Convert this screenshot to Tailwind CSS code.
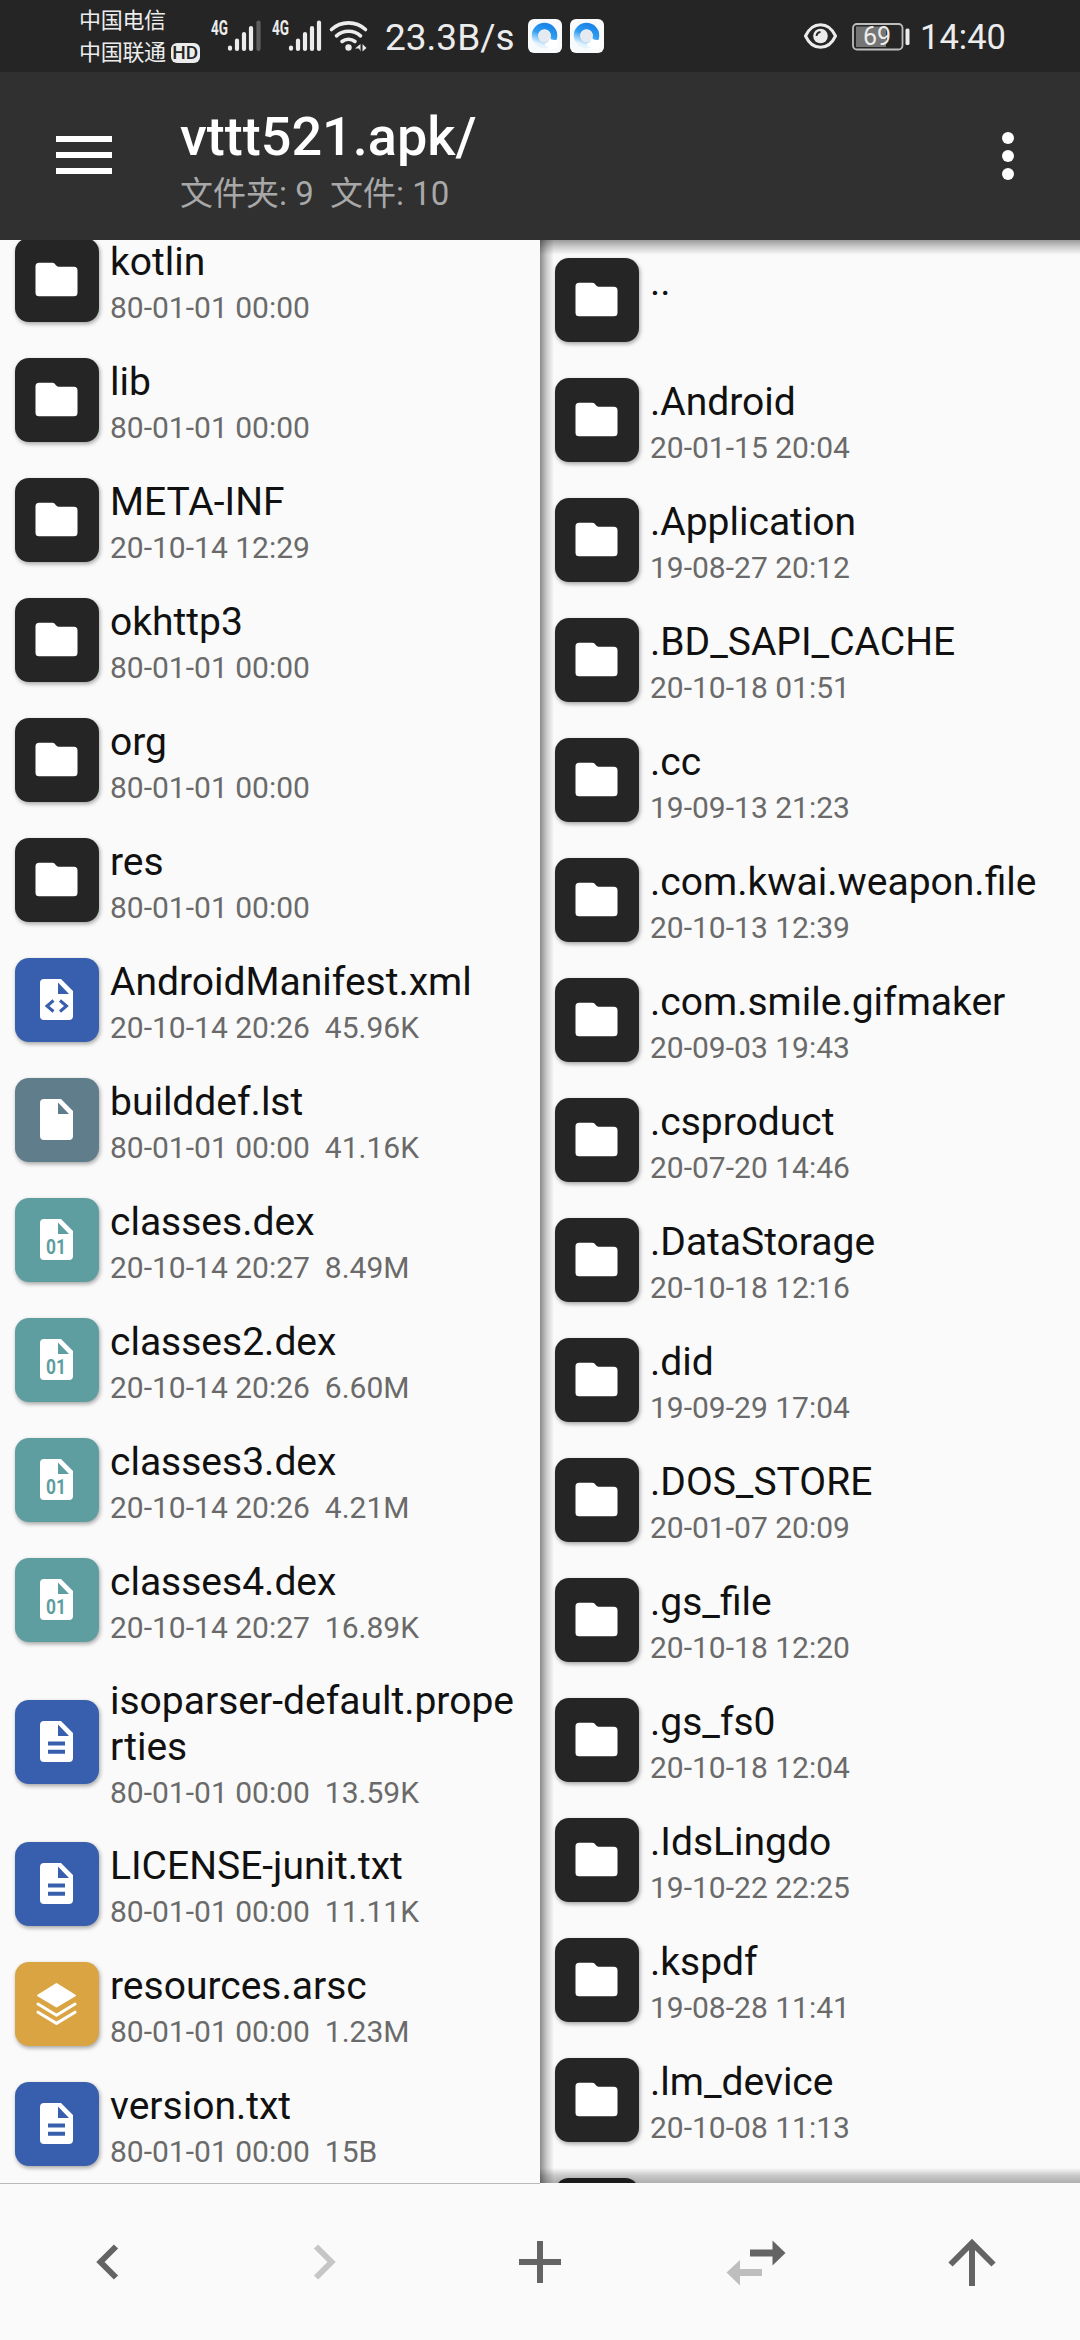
<!DOCTYPE html>
<html lang="zh-CN">
<head>
<meta charset="utf-8">
<title>vttt521.apk/</title>
<script src="https://cdn.jsdelivr.net/npm/@tailwindcss/browser@4"></script>
</head>
<body class="w-[1080px] h-[2340px] overflow-hidden bg-[#fafafa] font-['Roboto','Noto_Sans_CJK_SC',sans-serif] flex flex-col">

<!-- icon sprites -->
<svg class="hidden">
  <symbol id="folder" viewBox="0 0 84 84"><path fill="#fff" d="M24 24.700h13.500q1 0 1.700 .600l2.500 2.600q.800 .800 2 .800h15.300a3.500 3.500 0 0 1 3.500 3.500v22.500a3.500 3.500 0 0 1-3.500 3.500h-35a3.500 3.500 0 0 1-3.500-3.500v-26.500a3.500 3.500 0 0 1 3.500-3.500z"/></symbol>
  <symbol id="page" viewBox="0 0 84 84"><path fill="#fff" fill-rule="evenodd" d="M29 21h17l12 12v25a4 4 0 0 1-4 4h-25a4 4 0 0 1-4-4v-33a4 4 0 0 1 4-4zM43 24.500v11.500h11z"/></symbol>
</svg>

<header class="h-[72px] shrink-0 bg-[#252525] text-[#ececec] flex items-start">
  <div class="ml-[79px] w-[132px] pt-[5px] text-[22px] leading-[31px] shrink-0">
    <div class="h-[32px] tracking-[-0.3px]">中国电信</div>
    <div class="flex items-center h-[31px]"><span class="tracking-[-0.3px]">中国联通</span><span class="ml-[5px] w-[29px] h-[20px] rounded-[6px] bg-[#ececec] text-[#252525] text-[19px] leading-[20px] text-center font-medium">HD</span></div>
  </div>
  <svg class="w-[160px] h-[72px] shrink-0" viewBox="211 0 160 72">
    <g fill="#ececec" font-family="Roboto" font-weight="700" font-size="20"><text x="211" y="34.500" textLength="17" lengthAdjust="spacingAndGlyphs">4G</text><text x="272" y="34.500" textLength="17" lengthAdjust="spacingAndGlyphs">4G</text></g>
    <g stroke="#ececec" stroke-width="4.200" stroke-linecap="round">
      <path d="M230 47.500v1.200M237 40.500v8.500M244 34v15M251 28v21"/><path d="M258.500 22.500v26.500" stroke="#5e5e5e"/>
      <path d="M291 47.500v1.200M298 40.500v8.500M305 34v15M312 28v21M319 22.500v26.500"/>
    </g>
    <g fill="none" stroke="#ececec" stroke-width="3.600" stroke-linecap="round"><path d="M331.500 29.500a25 25 0 0 1 34 0M336.500 35.800a18 18 0 0 1 24 0M342 41.500a10.500 10.500 0 0 1 13 0"/></g>
    <circle cx="348.500" cy="47.500" r="3.200" fill="#ececec"/>
    <path fill="#ececec" d="M360.500 44v7.500l-1.500-3h-4zM362.500 51.500v-7.500l4 4z"/>
  </svg>
  <div class="ml-[14px] w-[143px] text-[37px] leading-[76px] shrink-0">23.3B/s</div>
  <svg class="w-[76px] h-[72px] shrink-0" viewBox="528 0 76 72">
    <defs>
      <linearGradient id="q" x1="0.700" y1="0" x2="0.350" y2="1"><stop offset="0" stop-color="#1c86e8"/><stop offset="0.450" stop-color="#2f9df0"/><stop offset="1" stop-color="#e6f4fd"/></linearGradient>
      <g id="qb"><rect width="34" height="34" rx="6" fill="#f8fafc"/><circle cx="16.500" cy="16.500" r="9.500" fill="none" stroke="url(#q)" stroke-width="6.500"/><circle cx="16.500" cy="17" r="6.300" fill="#e4eaef"/><path d="M22 18.500c1 3 4 2.500 7.500 2.200 1.500 3 1 7-2 9l-9 .300c1-1 2-1.500 2.500-2-3 .5-4-1.500-4.500-3.500 3-.5 4.500-2.500 5.500-6z" fill="#fff"/></g>
    </defs>
    <use href="#qb" x="528" y="19"/><use href="#qb" x="570" y="19"/>
  </svg>
  <svg class="ml-[198px] w-[110px] h-[72px] shrink-0" viewBox="802 0 110 72">
    <path d="M805.500 36c7-15 23-15 30 0-7 15-23 15-30 0z" fill="none" stroke="#ececec" stroke-width="3"/><circle cx="820.500" cy="36" r="7.300" fill="#ececec"/><path d="M816.500 36a4.500 4.500 0 0 1 4-4" fill="none" stroke="#252525" stroke-width="1.800"/>
    <rect x="856" y="26.500" width="30" height="20.500" fill="#757575"/><rect x="853" y="24" width="49.500" height="25.500" rx="4" fill="none" stroke="#bdbdbd" stroke-width="1.800"/><rect x="905.500" y="28.500" width="4" height="16.500" rx="1.500" fill="#ececec"/>
    <text x="863" y="45" fill="#ececec" font-family="Roboto" font-size="25" textLength="28">69</text>
  </svg>
  <div class="ml-[8px] text-[34.500px] leading-[75px] shrink-0">14:40</div>
</header>

<nav class="h-[168px] shrink-0 bg-[#303030] flex">
  <div class="ml-[56px] mt-[64px] w-[56px] flex flex-col gap-[10px]"><i class="h-[6px] bg-white"></i><i class="h-[6px] bg-white"></i><i class="h-[6px] bg-white"></i></div>
  <div class="ml-[68px] pt-[33px] w-[800px]">
    <div class="text-[54px] leading-[64px] font-medium text-white">vttt521.apk/</div>
    <div class="text-[33px] leading-[50px] text-[#a8a8a8] whitespace-pre">文件夹: 9  文件: 10</div>
  </div>
  <div class="ml-[22px] mt-[60px] flex flex-col gap-[6px]"><i class="size-[12px] rounded-full bg-white"></i><i class="size-[12px] rounded-full bg-white"></i><i class="size-[12px] rounded-full bg-white"></i></div>
</nav>

<main class="h-[1943px] shrink-0 flex overflow-hidden">
  <section id="left" class="w-[540px] h-full -mt-[20px] shrink-0"></section>
  <section class="relative w-[540px] h-[1943px] shrink-0 overflow-hidden">
    <div id="right"></div>
    <div class="absolute inset-y-0 left-0 w-[14px] bg-linear-to-r from-black/45 via-black/18 to-transparent"></div>
    <div class="absolute inset-x-0 top-0 h-[15px] bg-linear-to-b from-black/38 via-black/17 to-transparent"></div>
    <div class="absolute inset-x-0 bottom-0 h-[15px] bg-linear-to-t from-black/30 via-black/20 to-transparent"></div>
  </section>
</main>

<footer class="relative grow bg-[#fafafa] flex">
  <div class="absolute left-0 top-0 w-[540px] h-px bg-[#b8b8b8]"></div>
  <svg class="w-[1080px] h-[157px]" viewBox="0 2183 1080 157" fill="none" stroke="#646464" stroke-width="6">
    <path d="M116 2246.500l-15.500 15.500 15.500 15.500"/>
    <path d="M316 2246.500l15.500 15.500-15.500 15.500" stroke="#c6c6c6"/>
    <path d="M519 2262h42M540 2241v42"/>
    <path d="M750 2253h23" stroke-width="7"/><path d="M772.500 2240.500v25l13-12.500z" fill="#646464" stroke="none"/>
    <path d="M762 2272.500h-23" stroke="#bebebe" stroke-width="7"/><path d="M740 2260v25.500l-13.500-13z" fill="#bebebe" stroke="none"/>
    <path d="M972 2286v-43M950.500 2264.500l21.500-21.500 21.500 21.500"/>
  </svg>
</footer>

<template id="row">
  <div class="h-[120px] flex">
    <div class="ml-[15px] mt-[18px] size-[84px] shrink-0 rounded-[14px] shadow-[1px_2px_4px_rgba(0,0,0,0.35)]"><svg class="size-[84px]" viewBox="0 0 84 84"></svg></div>
    <div class="ml-[11px] w-[410px] pt-[19px]">
      <div class="text-[39px] leading-[46px] text-[#111111] break-all"></div>
      <div class="mt-[5px] text-[30px] leading-[35px] text-[#6a6a6a] whitespace-pre"></div>
    </div>
  </div>
</template>

<script>
const page = '<use href="#page"/>';
const kinds = {
  d: ['bg-[#252525]', '<use href="#folder"/>'],
  x: ['bg-[#375fae]', page + '<path d="M38.500 42.500l-6.500 5.500 6.500 5.500M45 42.500l6.500 5.500-6.500 5.500" fill="none" stroke="#375fae" stroke-width="3"/>'],
  b: ['bg-[#607d8b]', page],
  c: ['bg-[#5f9ea0]', page + '<text x="31" y="55.800" font-family="Roboto" font-weight="700" font-size="20.500" textLength="20" lengthAdjust="spacingAndGlyphs" fill="#5f9ea0">01</text>'],
  t: ['bg-[#375fae]', page + '<path d="M33 43.500h17M33 51.700h17" stroke="#375fae" stroke-width="4"/>'],
  r: ['bg-[#d9a441]', '<path fill="#fff" stroke="#fff" stroke-width="2" stroke-linejoin="round" d="M41.500 22l18.500 11.500-18.500 11L23 33.500z"/><path fill="none" stroke="#fff" stroke-width="3" stroke-linecap="round" stroke-linejoin="round" d="M23 42l18.500 11.200 18.500-11.200M23 50.200l18.500 11.200 18.500-11.200"/>']
};
const left = [
  ['d','kotlin','80-01-01 00:00'],['d','lib','80-01-01 00:00'],['d','META-INF','20-10-14 12:29'],['d','okhttp3','80-01-01 00:00'],['d','org','80-01-01 00:00'],['d','res','80-01-01 00:00'],
  ['x','AndroidManifest.xml','20-10-14 20:26  45.96K'],['b','builddef.lst','80-01-01 00:00  41.16K'],['c','classes.dex','20-10-14 20:27  8.49M'],['c','classes2.dex','20-10-14 20:26  6.60M'],['c','classes3.dex','20-10-14 20:26  4.21M'],['c','classes4.dex','20-10-14 20:27  16.89K'],
  ['t','isoparser-default.properties','80-01-01 00:00  13.59K',1],['t','LICENSE-junit.txt','80-01-01 00:00  11.11K'],['r','resources.arsc','80-01-01 00:00  1.23M'],['t','version.txt','80-01-01 00:00  15B']
];
const right = [
  ['d','..',''],['d','.Android','20-01-15 20:04'],['d','.Application','19-08-27 20:12'],['d','.BD_SAPI_CACHE','20-10-18 01:51'],['d','.cc','19-09-13 21:23'],['d','.com.kwai.weapon.file','20-10-13 12:39'],['d','.com.smile.gifmaker','20-09-03 19:43'],['d','.csproduct','20-07-20 14:46'],['d','.DataStorage','20-10-18 12:16'],['d','.did','19-09-29 17:04'],['d','.DOS_STORE','20-01-07 20:09'],['d','.gs_file','20-10-18 12:20'],['d','.gs_fs0','20-10-18 12:04'],['d','.IdsLingdo','19-10-22 22:25'],['d','.kspdf','19-08-28 11:41'],['d','.lm_device','20-10-08 11:13'],['d','','']
];
function fill(id, rows) {
  const host = document.getElementById(id);
  for (const [k, name, meta, tall] of rows) {
    const el = document.getElementById('row').content.firstElementChild.cloneNode(true);
    const [icon, text] = el.children;
    icon.classList.add(kinds[k][0]);
    icon.firstElementChild.innerHTML = kinds[k][1];
    text.children[0].textContent = name;
    text.children[1].textContent = meta;
    if (tall) { el.classList.replace('h-[120px]', 'h-[164px]'); icon.classList.replace('mt-[18px]', 'mt-[40px]'); text.classList.replace('pt-[19px]', 'pt-[18px]'); }
    host.append(el);
  }
}
fill('left', left);
fill('right', right);
</script>
<i class="hidden h-[164px] mt-[40px] pt-[18px]"></i>
</body>
</html>
